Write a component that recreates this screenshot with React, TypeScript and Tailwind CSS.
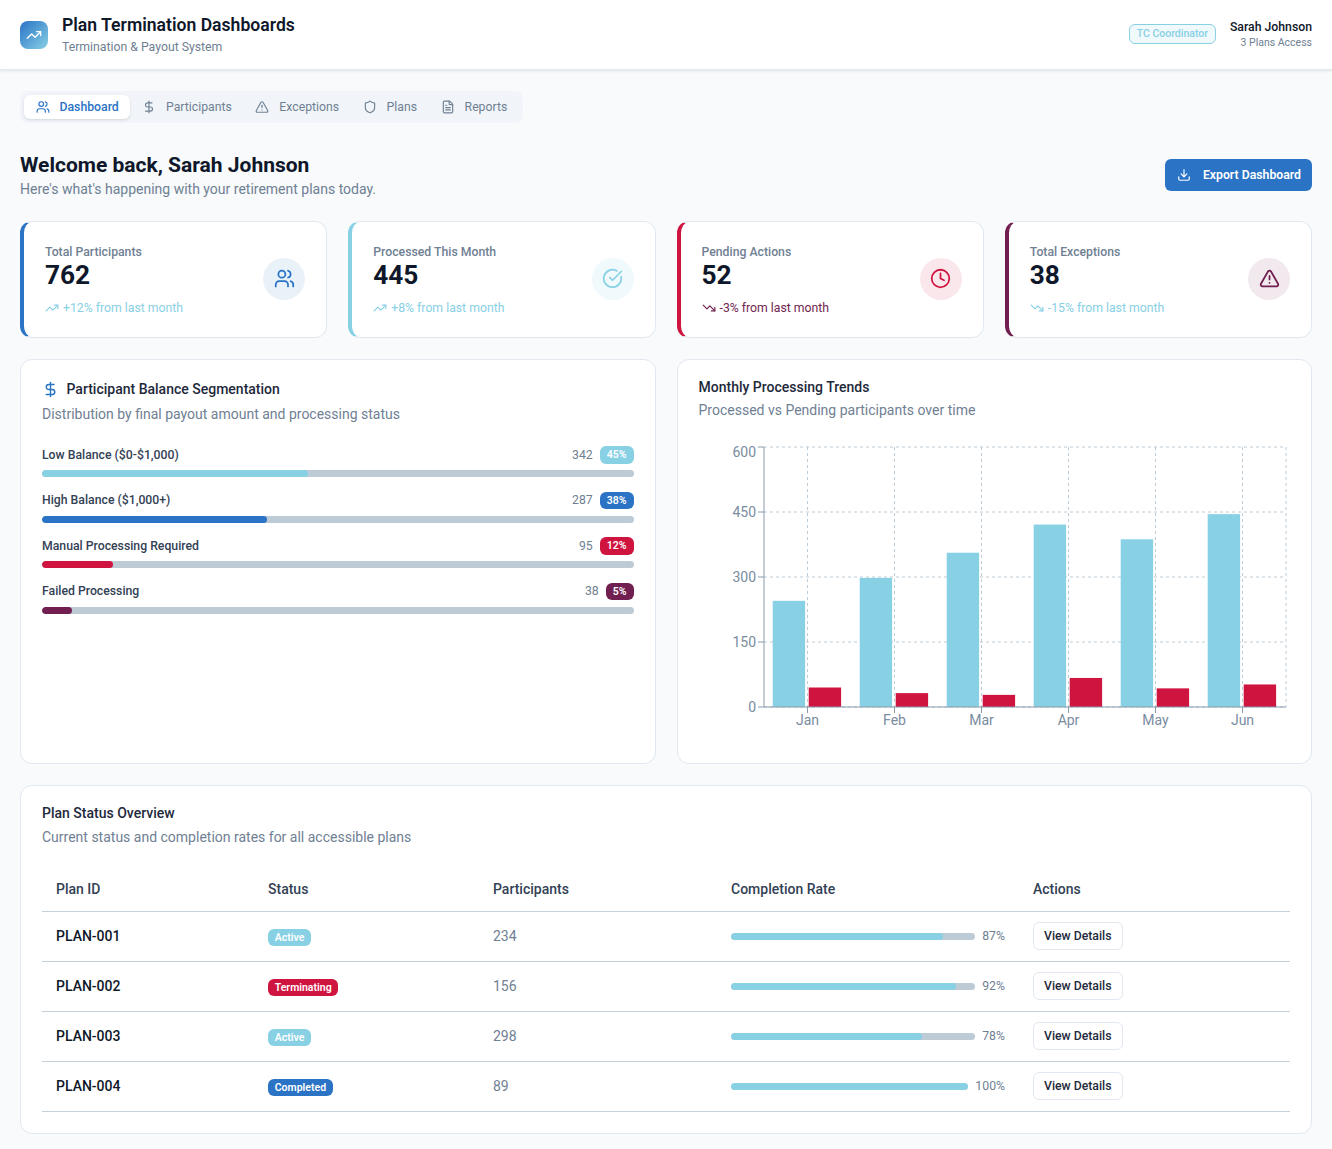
import React from 'react';
import {
  Users,
  DollarSign,
  TriangleAlert,
  Shield,
  FileText,
  TrendingUp,
  TrendingDown,
  Download,
  Clock,
  CircleCheckBig,
} from 'lucide-react';

const tabs = [
  { label: 'Dashboard', icon: Users, active: true },
  { label: 'Participants', icon: DollarSign },
  { label: 'Exceptions', icon: TriangleAlert },
  { label: 'Plans', icon: Shield },
  { label: 'Reports', icon: FileText },
];

const stats = [
  { label: 'Total Participants', value: '762', trend: '+12% from last month', up: true, icon: Users, border: 'border-l-[#2a73c5]', circle: 'bg-[#e9f1f9] text-[#2a73c5]', trendColor: 'text-[#88d0e4]' },
  { label: 'Processed This Month', value: '445', trend: '+8% from last month', up: true, icon: CircleCheckBig, border: 'border-l-[#88d0e4]', circle: 'bg-[#f0f9fc] text-[#88d0e4]', trendColor: 'text-[#88d0e4]' },
  { label: 'Pending Actions', value: '52', trend: '-3% from last month', up: false, icon: Clock, border: 'border-l-[#d01440]', circle: 'bg-[#fae7ec] text-[#d01440]', trendColor: 'text-[#711f50]' },
  { label: 'Total Exceptions', value: '38', trend: '-15% from last month', up: false, icon: TriangleAlert, border: 'border-l-[#711f50]', circle: 'bg-[#f1e9ee] text-[#711f50]', trendColor: 'text-[#88d0e4]' },
];

const segments = [
  { label: 'Low Balance ($0-$1,000)', count: 342, pct: 45, bar: 'bg-[#88d0e4]' },
  { label: 'High Balance ($1,000+)', count: 287, pct: 38, bar: 'bg-[#2a73c5]' },
  { label: 'Manual Processing Required', count: 95, pct: 12, bar: 'bg-[#d01440]' },
  { label: 'Failed Processing', count: 38, pct: 5, bar: 'bg-[#711f50]' },
];

const plans = [
  { id: 'PLAN-001', status: 'Active', badge: 'bg-[#88d0e4]', participants: 234, rate: 87 },
  { id: 'PLAN-002', status: 'Terminating', badge: 'bg-[#d01440]', participants: 156, rate: 92 },
  { id: 'PLAN-003', status: 'Active', badge: 'bg-[#88d0e4]', participants: 298, rate: 78 },
  { id: 'PLAN-004', status: 'Completed', badge: 'bg-[#2a73c5]', participants: 89, rate: 100 },
];

const months = [
  { m: 'Jan', a: 245, b: 45 },
  { m: 'Feb', a: 298, b: 32 },
  { m: 'Mar', a: 356, b: 28 },
  { m: 'Apr', a: 421, b: 67 },
  { m: 'May', a: 387, b: 43 },
  { m: 'Jun', a: 445, b: 52 },
];

// chart is 612 wide, 300 tall, plot area starts at 65,8
const TrendsChart = () => {
  const left = 65;
  const right = 587;
  const top = 8;
  const bottom = 268;
  const band = (right - left) / 6;
  const y = (v: number) => bottom - (v / 600) * (bottom - top);
  return (
    <svg width="612" height="300" className="block">
      {[0, 150, 300, 450, 600].map((v) => (
        <line key={v} x1={left} x2={right} y1={y(v)} y2={y(v)} stroke="#bccbd6" strokeDasharray="3 3" />
      ))}
      {months.map((d, i) => (
        <line key={d.m} x1={left + band * (i + 0.5)} x2={left + band * (i + 0.5)} y1={top} y2={bottom} stroke="#bccbd6" strokeDasharray="3 3" />
      ))}
      <line x1={right} x2={right} y1={top} y2={bottom} stroke="#bccbd6" strokeDasharray="3 3" />
      {months.map((d, i) => {
        const x = left + band * i + 8.7;
        return (
          <g key={d.m}>
            <rect x={x} y={y(d.a)} width={32.4} height={bottom - y(d.a)} fill="#88d0e4" />
            <rect x={x + 36} y={y(d.b)} width={32.4} height={bottom - y(d.b)} fill="#d01440" />
          </g>
        );
      })}
      <line x1={left} x2={left} y1={top} y2={bottom} stroke="#8a9aab" />
      <line x1={left} x2={right} y1={bottom} y2={bottom} stroke="#8a9aab" />
      {[0, 150, 300, 450, 600].map((v) => (
        <g key={v}>
          <line x1={left - 6} x2={left} y1={y(v)} y2={y(v)} stroke="#8a9aab" />
          <text x={left - 8} y={v === 600 ? y(v) + 10 : y(v) + 5} textAnchor="end" fontSize="14" fill="#7a8ca0">
            {v}
          </text>
        </g>
      ))}
      {months.map((d, i) => (
        <g key={d.m}>
          <line x1={left + band * (i + 0.5)} x2={left + band * (i + 0.5)} y1={bottom} y2={bottom + 6} stroke="#8a9aab" />
          <text x={left + band * (i + 0.5)} y={bottom + 18} textAnchor="middle" fontSize="14" fill="#7a8ca0">
            {d.m}
          </text>
        </g>
      ))}
    </svg>
  );
};

const App: React.FC = () => {
  return (
    <div className="min-h-screen bg-[#f8fafc] font-['Roboto',sans-serif] text-[#0f172a]">
      <header className="h-[70px] bg-white border-b border-[#e2e8f0] shadow-[0_1px_3px_rgba(0,0,0,0.1)] px-5 flex items-center justify-between">
        <div className="flex items-center gap-3.5">
          <div className="w-7 h-7 rounded-lg bg-gradient-to-br from-[#2a73c5] to-[#88d0e4] flex items-center justify-center text-white">
            <TrendingUp size={16} />
          </div>
          <div>
            <h1 className="text-[17.6px] leading-[22px] font-semibold">Plan Termination Dashboards</h1>
            <p className="mt-[2px] text-[12.25px] leading-[18px] text-[#6f8093]">Termination &amp; Payout System</p>
          </div>
        </div>
        <div className="flex items-center gap-3.5">
          <span className="mb-[2px] h-5 px-[7px] flex items-center rounded-md border border-[#88d0e4] bg-[#f0f9fc] text-[#88d0e4] text-[10.5px] font-medium">TC Coordinator</span>
          <div className="text-right">
            <div className="text-[12.25px] leading-[15px] font-medium">Sarah Johnson</div>
            <div className="mt-px text-[10.5px] leading-[14px] text-[#6f8093]">3 Plans Access</div>
          </div>
        </div>
      </header>

      <main className="px-5 pt-[21px] pb-[15px]">
        <nav className="inline-flex p-1 rounded-lg bg-[#f1f5f9]">
          {tabs.map((t) => (
            <div
              key={t.label}
              className={`h-6 flex items-center gap-2.5 rounded-md text-[12.25px] ${t.active ? 'px-[11.5px] bg-white text-[#2a73c5] font-medium shadow-sm' : 'px-[11.75px] text-[#6f8093]'}`}
            >
              <t.icon size={14} />
              {t.label}
            </div>
          ))}
        </nav>

        <div className="mt-[26px] flex items-start justify-between">
          <div>
            <h2 className="text-[21px] leading-[32px] font-bold">Welcome back, Sarah Johnson</h2>
            <p className="text-sm leading-[16px] text-[#6f8093]">Here's what's happening with your retirement plans today.</p>
          </div>
          <button className="mt-[10px] h-8 pl-3 pr-[11px] flex items-center gap-3 rounded-md bg-[#2a73c5] text-white text-[12.25px] font-semibold">
            <Download size={14} />
            Export Dashboard
          </button>
        </div>

        <div className="mt-6 grid grid-cols-4 gap-[21px]">
          {stats.map((s) => (
            <div key={s.label} className={`h-[117px] bg-white rounded-xl border border-[#e2e8f0] border-l-4 ${s.border} px-[21px] flex items-center justify-between`}>
              <div>
                <div className="text-[12.25px] leading-[16px] font-medium text-[#6f8093]">{s.label}</div>
                <div className="text-[26.25px] leading-[30px] font-bold">{s.value}</div>
                <div className={`mt-[10px] flex items-center gap-1 text-[12.25px] leading-[16px] ${s.trendColor}`}>
                  {s.up ? <TrendingUp size={14} /> : <TrendingDown size={14} />}
                  {s.trend}
                </div>
              </div>
              <div className={`mb-[2px] w-[42px] h-[42px] rounded-full flex items-center justify-center ${s.circle}`}>
                <s.icon size={21} />
              </div>
            </div>
          ))}
        </div>

        <div className="mt-[21px] grid grid-cols-2 gap-[21px]">
          <section className="h-[405px] bg-white rounded-xl border border-[#e2e8f0] px-[21px] pt-[20px]">
            <h3 className="flex items-center gap-[7.5px] text-sm leading-[18px] font-medium text-[#1e293b]">
              <DollarSign size={17} className="text-[#2a73c5]" />
              Participant Balance Segmentation
            </h3>
            <p className="mt-[7px] text-sm leading-[18px] text-[#6f8093]">Distribution by final payout amount and processing status</p>
            <div className="mt-[23px] flex flex-col gap-[14.5px]">
              {segments.map((s) => (
                <div key={s.label}>
                  <div className="flex items-center justify-between h-[18px]">
                    <span className="text-[12.25px] font-medium text-[#334155]">{s.label}</span>
                    <span className="flex items-center gap-[7px]">
                      <span className="text-[12.25px] text-[#6f8093]">{s.count}</span>
                      <span className={`h-[17.5px] px-[7px] flex items-center rounded-md text-white text-[10.5px] font-semibold ${s.bar}`}>{s.pct}%</span>
                    </span>
                  </div>
                  <div className="mt-[6px] h-[7px] rounded-full bg-[#bccbd6] overflow-hidden">
                    <div className={`h-full rounded-full ${s.bar}`} style={{ width: `${s.pct}%` }} />
                  </div>
                </div>
              ))}
            </div>
          </section>

          <section className="h-[405px] bg-white rounded-xl border border-[#e2e8f0] px-[21px] pt-[18px]">
            <h3 className="text-sm leading-[18px] font-medium text-[#1e293b]">Monthly Processing Trends</h3>
            <p className="mt-[5px] text-sm leading-[18px] text-[#6f8093]">Processed vs Pending participants over time</p>
            <div className="mt-5">
              <TrendsChart />
            </div>
          </section>
        </div>

        <section className="mt-[21px] bg-white rounded-xl border border-[#e2e8f0] px-[21px] pt-[18px] pb-[21px]">
          <h3 className="text-sm leading-[18px] font-medium text-[#1e293b]">Plan Status Overview</h3>
          <p className="mt-[6px] text-sm leading-[18px] text-[#6f8093]">Current status and completion rates for all accessible plans</p>
          <table className="mt-[21px] w-full table-fixed text-sm">
            <colgroup>
              <col className="w-[212px]" />
              <col className="w-[225px]" />
              <col className="w-[238px]" />
              <col className="w-[302px]" />
              <col />
            </colgroup>
            <thead>
              <tr className="h-[44px] border-b border-[#c6d0d9]">
                {['Plan ID', 'Status', 'Participants', 'Completion Rate', 'Actions'].map((h) => (
                  <th key={h} className="px-3.5 text-left font-medium text-[#334155]">{h}</th>
                ))}
              </tr>
            </thead>
            <tbody>
              {plans.map((p) => (
                <tr key={p.id} className="h-[50px] border-b border-[#c6d0d9]">
                  <td className="px-3.5 font-medium">{p.id}</td>
                  <td className="px-3.5">
                    <span className={`inline-flex h-[17px] px-[6.75px] items-center rounded-md text-white text-[10.5px] font-semibold ${p.badge}`}>{p.status}</span>
                  </td>
                  <td className="px-3.5 text-[#6f8093]">{p.participants}</td>
                  <td className="px-3.5">
                    <div className="flex items-center gap-[7px]">
                      <div className="flex-1 h-[7px] rounded-full bg-[#bccbd6] overflow-hidden">
                        <div className="h-full rounded-full bg-[#88d0e4]" style={{ width: `${p.rate}%` }} />
                      </div>
                      <span className="pt-px text-[12.25px] text-[#6f8093]">{p.rate}%</span>
                    </div>
                  </td>
                  <td className="px-3.5">
                    <button className="h-7 pt-px px-2.5 rounded-md border border-[#e2e8f0] bg-white text-[12.25px] font-medium text-[#1e293b]">View Details</button>
                  </td>
                </tr>
              ))}
            </tbody>
          </table>
        </section>
      </main>
    </div>
  );
};

export default App;
